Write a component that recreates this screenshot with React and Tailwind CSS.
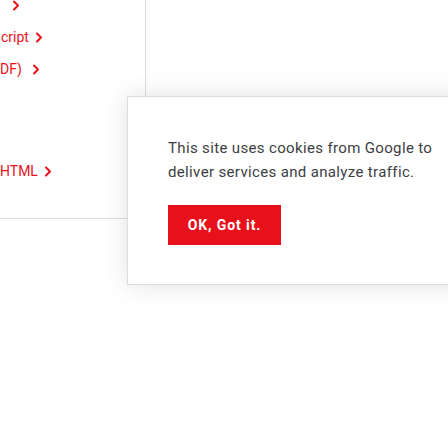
import React from 'react';

const Chevron = () => (
  <svg width="8" height="11" viewBox="0 0 8 11" className="shrink-0">
    <path d="M2 1.5 L6 5.5 L2 9.5" fill="none" stroke="#e8111b" strokeWidth="2" strokeLinecap="round" strokeLinejoin="round" />
  </svg>
);

function NavRow({ label, gap = 'gap-[6px]', className = '' }) {
  return (
    <div className={`h-[32px] flex items-center ${gap} ${className}`}>
      <span className="text-[14px] text-[#e8111b] whitespace-nowrap">{label}</span>
      <Chevron />
    </div>
  );
}

export default function App() {
  return (
    <div className="relative w-[448px] h-[448px] overflow-hidden bg-white font-['Roboto','Liberation_Sans',sans-serif]">
      <div className="h-[219px] border-b border-[#dadce0] flex">
        <div className="w-[146px] h-full border-r border-[#dadce0] overflow-hidden">
          <div className="-mt-[11px] flex flex-col">
            <NavRow label="" className="pl-[6px]" />
            <NavRow label="cript" className="pl-[1px]" />
            <NavRow label="DF)" gap="gap-[10px]" />
            <NavRow label="HTML" className="mt-[70px]" />
          </div>
        </div>
      </div>

      <div className="absolute left-[127px] top-[96px] w-[360px] bg-white border border-[#dadce0] shadow-[0_0_24px_rgba(0,0,0,0.12)] px-[40px] pt-[39px] pb-[39px]">
        <p className="text-[15px] tracking-[0.35px] leading-[24px] text-[#3c4043] whitespace-nowrap">
          This site uses cookies from Google to
          <br />
          deliver services and analyze traffic.
        </p>
        <button className="mt-[21px] w-[113px] h-[40px] bg-[#e8111b] text-white text-[14px] tracking-[0.9px] font-bold flex items-center justify-center">
          OK, Got it.
        </button>
      </div>
    </div>
  );
}
